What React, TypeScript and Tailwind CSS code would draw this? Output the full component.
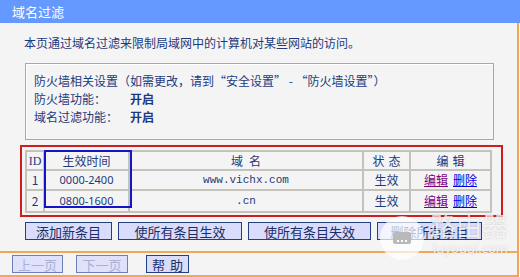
import React from "react";

const font = "font-['SimSun','Noto_Sans_CJK_SC',sans-serif]";

type Rule = { id: number; time: string; domain: string };

const rules: Rule[] = [
  { id: 1, time: "0000-2400", domain: "www.vichx.com" },
  { id: 2, time: "0800-1600", domain: ".cn" },
];

function Btn({ children, w, disabled }: { children: React.ReactNode; w: string; disabled?: boolean }) {
  return (
    <div
      className={`${w} h-[18px] flex items-center justify-center border text-[13px] leading-none ${
        disabled
          ? "bg-[#dfe2fa] border-[#6f7fb8] text-[#a9b0d4]"
          : "bg-[#dadcfb] border-[#23407f] text-[#1b2f66]"
      }`}
    >
      {children}
    </div>
  );
}

export default function App() {
  return (
    <div className={`relative w-[520px] h-[277px] overflow-hidden bg-[#f4f4f4] ${font} text-[#1d3a7c]`}>
      {/* title bar */}
      <div className="h-[23px] bg-[#6699ff] flex items-center pl-[12px] text-white text-[13px]">
        域名过滤
      </div>

      <div className="h-[254px] mr-[1px] border-r-2 border-b-2 border-[#f2a656] flex flex-col">
        <div className="h-[40px] flex items-center pl-[24px] text-[12px]">
          本页通过域名过滤来限制局域网中的计算机对某些网站的访问。
        </div>

        {/* firewall info */}
        <div className="ml-[25px] w-[469px] h-[77px] border border-[#a9a9a2] shadow-[inset_1px_1px_0_#ffffff] pl-[8px] pt-[8px] text-[12px] leading-[18px]">
          <div>防火墙相关设置（如需更改，请到“安全设置” - “防火墙设置”）</div>
          <div className="flex">
            <span className="w-[96px]">防火墙功能：</span>
            <span className="font-bold">开启</span>
          </div>
          <div className="flex">
            <span className="w-[96px]">域名过滤功能：</span>
            <span className="font-bold">开启</span>
          </div>
        </div>

        {/* rules table */}
        <div className="relative mt-[5px] ml-[20px] w-[483px] h-[72px] border-2 border-[#cf1c1c] pl-[3px] pt-[3px]">
          <div className="w-[467px] border-2 border-[#c3c3bc] text-[12px]">
            <div className="grid grid-cols-[16px_85px_234px_47px_81px] h-[19px] border-b-2 border-[#c3c3bc]">
              <div className="flex items-center justify-center font-['Liberation_Serif',serif] text-[12px]">ID</div>
              <div className="flex items-center justify-center border-l-2 border-[#c3c3bc]">生效时间</div>
              <div className="flex items-center justify-center border-l-2 border-[#c3c3bc] tracking-[6px] pl-[6px]">域名</div>
              <div className="flex items-center justify-center border-l-2 border-[#c3c3bc] tracking-[4px] pl-[4px]">状态</div>
              <div className="flex items-center justify-center border-l-2 border-[#c3c3bc] tracking-[4px] pl-[4px]">编辑</div>
            </div>
            {rules.map((r, i) => (
              <div
                key={r.id}
                className={`grid grid-cols-[16px_85px_234px_47px_81px] h-[20px] ${
                  i === 0 ? "border-b-2 border-[#c3c3bc]" : "h-[18px]"
                }`}
              >
                <div className="flex items-center justify-center">{r.id}</div>
                <div className="flex items-center justify-center border-l-2 border-[#c3c3bc] font-['Noto_Sans',sans-serif] text-[11px]">
                  {r.time}
                </div>
                <div className="flex items-center justify-center border-l-2 border-[#c3c3bc] font-['Liberation_Mono',monospace] text-[11px]">
                  {r.domain}
                </div>
                <div className="flex items-center justify-center border-l-2 border-[#c3c3bc]">生效</div>
                <div className="flex items-center justify-center gap-[5px] border-l-2 border-[#c3c3bc]">
                  <a className="underline text-[#800080]">编辑</a>
                  <a className="underline text-[#0000ee]">删除</a>
                </div>
              </div>
            ))}
          </div>
          {/* highlight on the time column */}
          <div className="absolute left-[22px] top-[3px] w-[88px] h-[58px] border-2 border-[#1515c8]" />
        </div>

        <div className="flex gap-[6px] ml-[25px] mt-[5px]">
          <Btn w="w-[87px]">添加新条目</Btn>
          <Btn w="w-[124px]">使所有条目生效</Btn>
          <Btn w="w-[123px]">使所有条目失效</Btn>
          <Btn w="w-[105px]">删除所有条目</Btn>
        </div>

        <div className="mt-[11px] border-t-2 border-[#f2a656]" />

        <div className="flex ml-[12px] mt-[2px] gap-[13px]">
          <Btn w="w-[51px]" disabled>上一页</Btn>
          <Btn w="w-[52px]" disabled>下一页</Btn>
          <div className="ml-[5px]">
            <Btn w="w-[43px]">
              <span className="tracking-[5px] pl-[5px]">帮助</span>
            </Btn>
          </div>
        </div>
      </div>

      {/* watermark */}
      <div className="absolute left-[380px] top-[216px] w-[44px] h-[44px] rounded-full bg-white/70 flex items-center justify-center">
        <div className="w-[18px] h-[12px] rounded-[2px] bg-[#b9b9b9] flex items-end justify-center gap-[2px] pb-[2px]">
          <span className="w-[2px] h-[2px] bg-white" />
          <span className="w-[2px] h-[2px] bg-white" />
          <span className="w-[2px] h-[2px] bg-white" />
        </div>
      </div>
      <div className="absolute left-[430px] top-[212px] text-[26px] leading-none text-white/75 font-['Noto_Sans_CJK_SC',sans-serif] [text-shadow:0_0_2px_rgba(0,0,0,0.2)]">
        路由器
      </div>
      <div className="absolute left-[433px] top-[242px] text-[13px] leading-none text-white/80 font-['Noto_Sans',sans-serif] [text-shadow:0_0_2px_rgba(0,0,0,0.2)]">
        luyouqi.com
      </div>
    </div>
  );
}
